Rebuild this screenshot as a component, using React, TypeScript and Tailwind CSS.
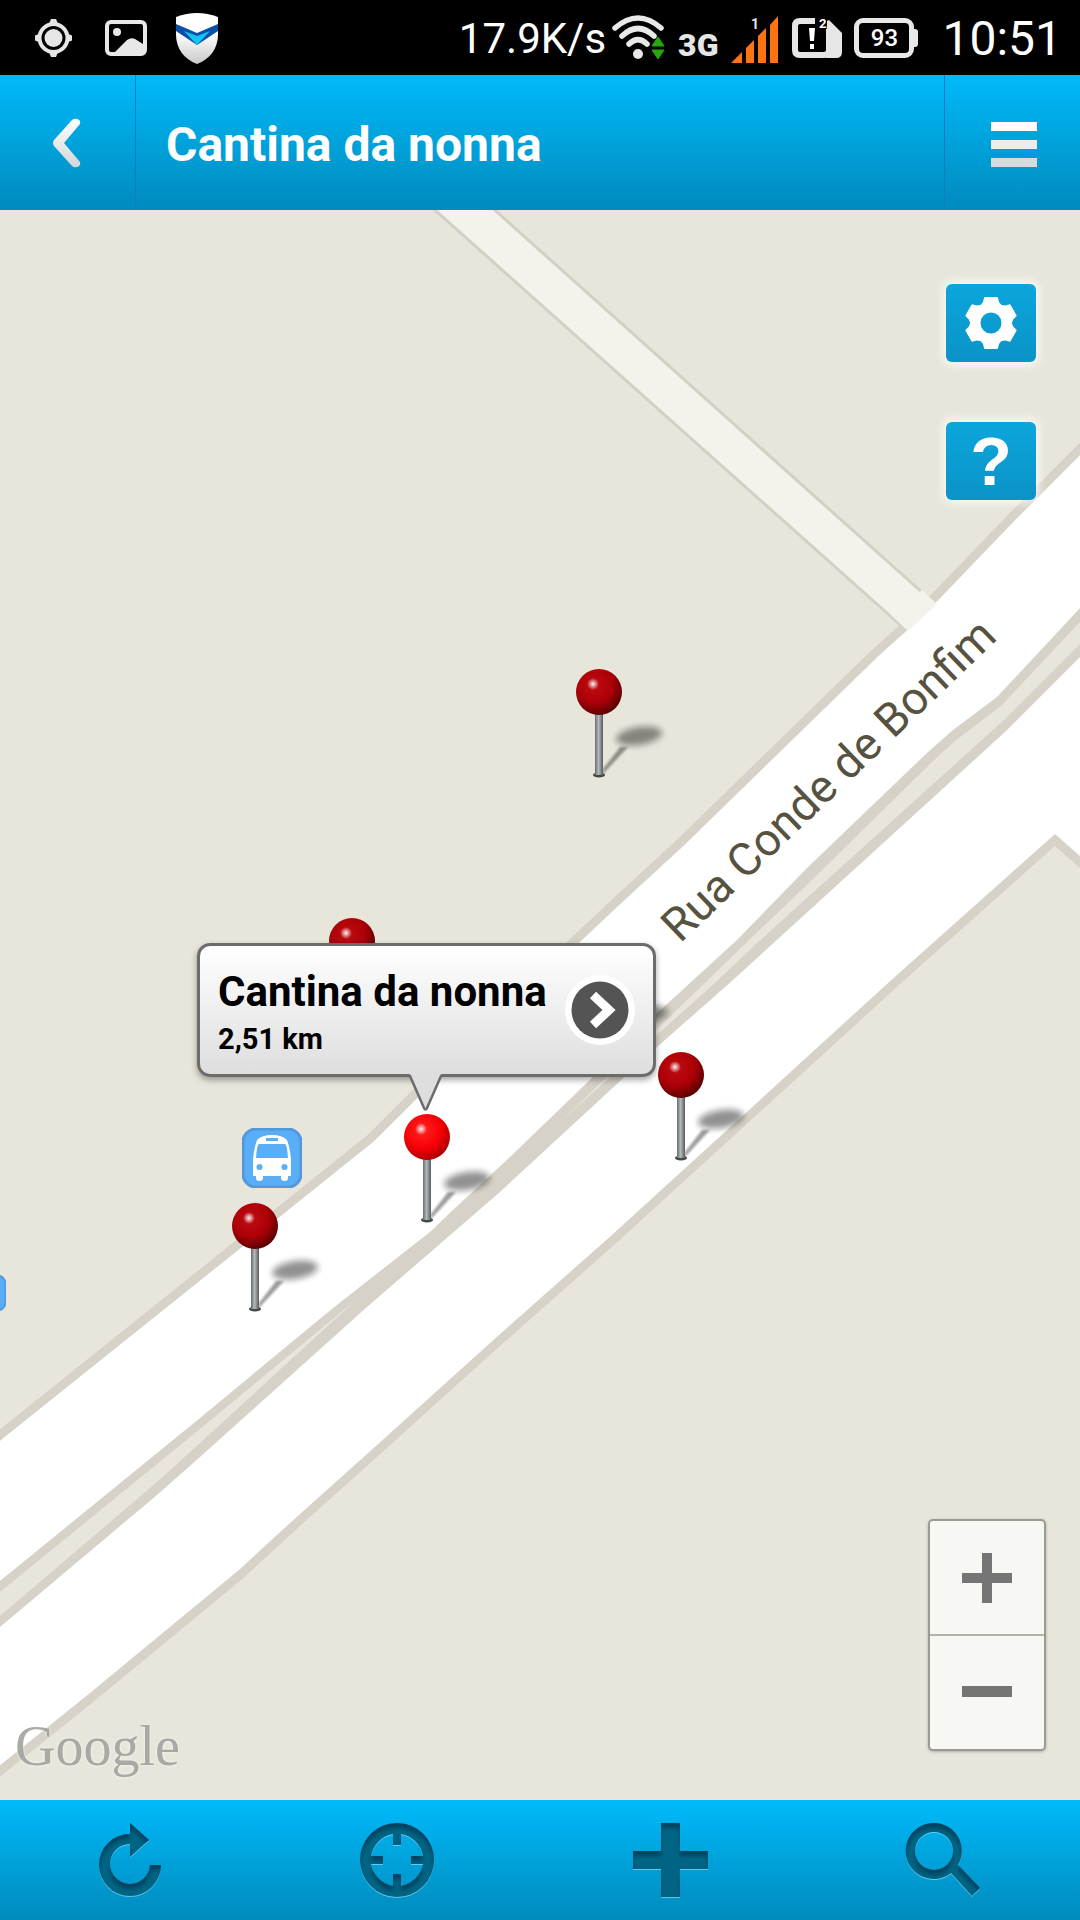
import type { ReactNode } from "react";

const DARK_PIN = { light: "#c00d12", base: "#ab0007", dark: "#5c0003" };
const ACTIVE_PIN = { light: "#ff2424", base: "#f80006", dark: "#b00003" };

function StatusBar() {
  return (
    <div className="flex h-[75px] shrink-0 items-center justify-between bg-black pr-[18px] pl-[35px] text-white">
      <div className="flex items-center gap-[33px]">
        <svg width="37" height="38" viewBox="0 0 37 38" aria-label="Location">
          <circle cx="18.500" cy="19" r="14" fill="none" stroke="#e6e6e6" strokeWidth="4" />
          <circle cx="18.500" cy="19" r="9" fill="#e6e6e6" />
          <path d="M16 0h5l2 5h-9zM16 38h5l2-5h-9zM0 16.500v5l5 2v-9zM37 16.500v5l-5 2v-9z" fill="#e6e6e6" />
        </svg>
        <svg width="42" height="36" viewBox="0 0 42 36" aria-label="Picture">
          <rect x="2" y="2" width="38" height="32" rx="4" fill="none" stroke="#e8e8e8" strokeWidth="4" />
          <circle cx="12" cy="12" r="4" fill="#e8e8e8" />
          <path d="M8 34L22 20Q26 17 30 19L38 24V34Z" fill="#e8e8e8" />
        </svg>
        <svg className="-ml-1" width="42" height="52" viewBox="0 0 42 52" aria-label="Shield">
          <defs>
            <linearGradient id="shield" x1="0" y1="0" x2="0" y2="1">
              <stop offset="0.4" stopColor="#ffffff" />
              <stop offset="1" stopColor="#c9c9c9" />
            </linearGradient>
          </defs>
          <path d="M0 5Q21-3 42 5V22C42 37 34 47 21 52C8 47 0 37 0 22Z" fill="url(#shield)" />
          <path d="M0 12L21 21L42 12V19L21 33L0 19Z" fill="#0b4fa8" />
          <path d="M8 19L21 24L34 19L21 33Z" fill="#12c4ee" />
        </svg>
      </div>
      <div className="flex items-center">
        <span className="pt-[2px] font-[Roboto,sans-serif] text-[42px] leading-[48px]">17.9K/s</span>
        <svg className="ml-[6px]" width="53" height="46" viewBox="0 0 53 46" aria-label="Wi-Fi">
          <g fill="none" stroke="#e8e8e8" strokeWidth="5.500" strokeLinecap="round">
            <path d="M3 13Q26-7 49 13" />
            <path d="M10 21Q26 6 42 21" />
            <path d="M17 29Q26 20 35 29" />
          </g>
          <circle cx="26" cy="39" r="5" fill="#e8e8e8" />
          <path d="M40 31L46 22L52 31ZM40 35L46 44L52 35Z" fill="#27a80b" stroke="#27a80b" strokeWidth="1" />
        </svg>
        <span className="ml-[13px] pt-[15px] font-[Roboto,sans-serif] text-[32px] leading-[32px] font-black text-[#e6e6e6]">3G</span>
        <svg className="ml-[13px]" width="48" height="50" viewBox="0 -2 48 50" aria-label="Signal">
          <path d="M0 48L11 37V48ZM15 33L23 25V48H15ZM27 21L35 13V48H27ZM39 10L47 1V48H39Z" fill="#ff7410" />
          <text x="20" y="14" fontFamily="Roboto, sans-serif" fontSize="14" fontWeight="700" fill="#e6e6e6">1</text>
        </svg>
        <svg className="ml-[13px]" width="50" height="48" viewBox="0 -4 50 48" aria-label="SIM 2">
          <path d="M23 3H8Q3 3 3 8V32Q3 37 8 37H32Q37 37 37 32V11" fill="none" stroke="#e6e6e6" strokeWidth="6" />
          <path d="M35 3L37 2L50 15V34Q50 40 44 40H34Z" fill="#e6e6e6" />
          <path d="M17 10H23L22 23H18ZM18 26H22V31H18Z" fill="#fff" />
          <text x="27" y="10" fontFamily="Roboto, sans-serif" fontSize="13" fontWeight="700" fill="#fff">2</text>
        </svg>
        <div className="ml-[12px] flex items-center">
          <div className="flex h-[40px] w-[60px] items-center justify-center rounded-[9px] border-[5px] border-[#e8e8e8] font-[Roboto,sans-serif] text-[24px] leading-[28px] font-medium">93</div>
          <div className="h-[18px] w-[4px] rounded-r-[3px] bg-[#e8e8e8]" />
        </div>
        <span className="ml-[24px] pt-[2px] font-[Roboto,sans-serif] text-[48px] leading-[56px]">10:51</span>
      </div>
    </div>
  );
}

function Header() {
  return (
    <header className="flex h-[135px] shrink-0 items-stretch bg-linear-to-b from-[#00bafa] to-[#008bbd]">
      <button aria-label="Back" className="flex w-[136px] items-center justify-center border-r border-[#1479c8]">
        <svg width="30" height="50" viewBox="0 0 30 50">
          <defs>
            <linearGradient id="back" x1="0" y1="0" x2="0" y2="1">
              <stop offset="0" stopColor="#fff" />
              <stop offset="1" stopColor="#d2d6d8" />
            </linearGradient>
          </defs>
          <path d="M19 2Q21 0 24 1Q28 2 27 6L11 25L27 44Q28 48 24 49Q21 50 19 48L1 28Q-1 25 1 22Z" fill="url(#back)" />
        </svg>
      </button>
      <h1 className="flex min-w-0 grow items-center pt-[4px] pl-[30px] font-[Roboto,sans-serif] text-[48px] leading-[56px] font-bold text-white">
        Cantina da nonna
      </h1>
      <button aria-label="Menu" className="flex w-[136px] flex-col items-end justify-center gap-[9px] border-l border-[#1479c8] pt-[4px] pr-[43px]">
        <span className="h-[9px] w-[46px] bg-white" />
        <span className="h-[9px] w-[46px] bg-[#ececee]" />
        <span className="h-[9px] w-[46px] bg-[#d8dadd]" />
      </button>
    </header>
  );
}

function Streets() {
  return (
    <svg className="absolute inset-0 size-full" viewBox="0 210 1080 1590" preserveAspectRatio="xMidYMid slice">
      <rect x="-500" y="0" width="2500" height="2200" fill="#e8e6da" />
      <path d="M390 170L905 629L934 603L450 170Z" fill="#f4f3eb" />
      <path d="M390 170L906 630M450 170L934 603" fill="none" stroke="#d3d0c4" strokeWidth="3" />
      <path
        d="M-20 1452L0 1435L371 1138L413 1096L567 948L618 900L680 843L873 655L903 628L933 599L1012 517L1080 449L1110 419V888L1080 862L1055 840L898 980L760 1106L613 1240L500 1340L367 1460L300 1520L240 1575L91 1698L0 1771L-20 1785Z"
        fill="#fff"
        stroke="#d6d2c7"
        strokeWidth="9"
      />
      <path d="M892 616L908 631L937 604L922 590Z" fill="#f4f3eb" />
      <path
        d="M0 1581L200 1418L333 1308L430 1232L453 1210L510 1157L595 1075L655 1015L737 940L807 868L928 752L953 730L997 697L1080 608L1110 578V627L1080 657L1005 732L733 980L657 1047L500 1192L367 1307L200 1457L157 1495L0 1627Z"
        fill="#d6d2c7"
      />
      <path
        d="M1110 592L1080 622L1001 706L955 741L931 763L811 881L748 941L707 981L560 1122L717 981L757 943L1004 720L1080 644L1110 614ZM0 1592L200 1429L357 1299L200 1443L157 1482L0 1616Z"
        fill="#e8e6da"
      />
      <text
        transform="translate(680 944) rotate(-43.800)"
        fontFamily="Roboto, sans-serif"
        fontSize="46"
        fill="#56523f"
      >
        Rua Conde de Bonfim
      </text>
    </svg>
  );
}

function Pin({ id, className, colors, label }: { id: string; className: string; colors: typeof DARK_PIN; label: string }) {
  return (
    <button aria-label={label} className={className}>
      <svg width="96" height="112" viewBox="0 0 96 112">
        <defs>
          <radialGradient id={`${id}-ball`} cx="0.400" cy="0.350" r="0.650">
            <stop offset="0" stopColor={colors.light} />
            <stop offset="0.600" stopColor={colors.base} />
            <stop offset="1" stopColor={colors.dark} />
          </radialGradient>
          <radialGradient id={`${id}-shine`}>
            <stop offset="0" stopColor="#fff" stopOpacity="0.950" />
            <stop offset="1" stopColor="#fff" stopOpacity="0" />
          </radialGradient>
          <linearGradient id={`${id}-stem`} x1="0" y1="0" x2="1" y2="0">
            <stop offset="0" stopColor="#666b6e" />
            <stop offset="0.450" stopColor="#b4b9bc" />
            <stop offset="1" stopColor="#555a5c" />
          </linearGradient>
          <filter id={`${id}-blur`} x="-30%" y="-80%" width="160%" height="260%">
            <feGaussianBlur stdDeviation="3" />
          </filter>
          <filter id={`${id}-thin`} x="-30%" y="-30%" width="160%" height="160%">
            <feGaussianBlur stdDeviation="1" />
          </filter>
        </defs>
        <ellipse
          cx="64"
          cy="68"
          rx="23"
          ry="9"
          transform="rotate(-9 64 68)"
          fill="#111"
          opacity="0.450"
          filter={`url(#${id}-blur)`}
        />
        <path d="M27 107L28 101L45 79L53 79Z" fill="#111" opacity="0.400" filter={`url(#${id}-thin)`} />
        <ellipse cx="24" cy="107" rx="6" ry="2.500" fill="#44484a" />
        <rect x="20" y="44" width="8" height="63" fill={`url(#${id}-stem)`} />
        <circle cx="24" cy="24" r="23" fill={`url(#${id}-ball)`} />
        <circle cx="18" cy="16" r="6" fill={`url(#${id}-shine)`} />
      </svg>
    </button>
  );
}

function BusStop({ className }: { className: string }) {
  return (
    <svg className={className} viewBox="0 0 60 60" aria-label="Bus stop">
      <rect x="1" y="1" width="58" height="58" rx="13" fill="#5aaef8" stroke="#5398dd" strokeWidth="3" />
      <path d="M15 12Q20 7 30 7Q40 7 45 12Q48 20 49 31V48H46V50Q46 53 42.500 53Q39 53 39 50V48H21V50Q21 53 17.500 53Q14 53 14 50V48H11V31Q12 20 15 12Z" fill="#fff" />
      <path d="M24 10H36V13H24ZM17 16H43Q45 16 46 30H14Q15 16 17 16Z" fill="#5aaef8" />
      <circle cx="17.500" cy="39" r="3" fill="#5aaef8" />
      <circle cx="42.500" cy="39" r="3" fill="#5aaef8" />
    </svg>
  );
}

function Callout() {
  return (
    <button className="absolute top-[733px] left-[197px] flex h-[134px] w-[459px] items-center justify-between rounded-[13px] border-[3px] border-[#6c6c6b] bg-linear-to-b from-white to-[#dedede] pr-[18px] pl-[18px] text-left font-[Roboto,sans-serif] font-bold text-black shadow-[0_3px_6px_rgba(0,0,0,0.35)]">
      <span className="flex flex-col pt-[6px]">
        <span className="text-[42px] leading-[52px] whitespace-nowrap">Cantina da nonna</span>
        <span className="text-[29px] leading-[42px]">2,51 km</span>
      </span>
      <svg width="70" height="70" viewBox="0 0 70 70">
        <circle cx="35" cy="35" r="35" fill="#fff" />
        <circle cx="35" cy="35" r="28.500" fill="#545454" />
        <path d="M28 20L44 35L28 50" fill="none" stroke="#fff" strokeWidth="9" />
      </svg>
      <svg className="absolute top-[127px] left-[207px]" width="38" height="40" viewBox="0 0 38 40">
        <path d="M2 0L17 35Q18.500 38 20 35L35 0Z" fill="#dedede" />
        <path d="M1 3H3L17 35Q18.500 38 20 35L34 3H36" fill="none" stroke="#6c6c6b" strokeWidth="2.500" />
      </svg>
    </button>
  );
}

const squareButton =
  "flex h-[78px] w-[90px] items-center justify-center rounded-[6px] bg-linear-to-b from-[#0ba6dc] to-[#0b93c6] text-white shadow-[0_0_10px_4px_rgba(255,255,255,0.65)]";

function MapView() {
  return (
    <main className="relative min-h-[1590px] grow overflow-hidden bg-[#e8e6da]">
      <Streets />
      <BusStop className="absolute top-[918px] left-[242px] size-[60px]" />
      <BusStop className="absolute top-[1065px] -left-[30px] size-[36px]" />

      <Pin id="p1" label="Place 1" colors={DARK_PIN} className="absolute top-[458px] left-[575px]" />
      <Pin id="p2" label="Place 2" colors={DARK_PIN} className="absolute top-[707px] left-[328px]" />
      <Pin id="p3" label="Place 3" colors={DARK_PIN} className="absolute top-[737px] left-[581px]" />
      <Pin id="p4" label="Place 4" colors={DARK_PIN} className="absolute top-[841px] left-[657px]" />
      <Pin id="p5" label="Place 5" colors={DARK_PIN} className="absolute top-[992px] left-[231px]" />
      <Pin id="p6" label="Cantina da nonna" colors={ACTIVE_PIN} className="absolute top-[903px] left-[403px]" />
      <Callout />

      <div className="absolute top-[74px] right-[44px] flex flex-col gap-[60px]">
        <button aria-label="Settings" className={squareButton}>
          <svg width="54" height="54" viewBox="-27 -27 54 54">
            <defs>
              <mask id="gear-hole">
                <rect x="-27" y="-27" width="54" height="54" fill="#fff" />
                <circle r="10.500" fill="#000" />
              </mask>
            </defs>
            <g fill="#fff" mask="url(#gear-hole)">
              <circle r="20" />
              {[0, 60, 120, 180, 240, 300].map((a) => (
                <path key={a} d="M-6-26H6Q7-26 7-25L8-21L12-16H-12L-8-21L-7-25Q-7-26-6-26Z" transform={`rotate(${a})`} />
              ))}
            </g>
          </svg>
        </button>
        <button aria-label="Help" className={squareButton}>
          <span className="font-['Liberation_Sans',sans-serif] text-[68px] leading-[72px] font-bold">?</span>
        </button>
      </div>

      <div className="absolute right-[34px] bottom-[49px] flex h-[232px] w-[118px] flex-col rounded-[5px] border-2 border-[#9c9b93] bg-[#f7f7f3] shadow-[0_1px_3px_rgba(0,0,0,0.25)]">
        <button aria-label="Zoom in" className="flex grow items-center justify-center border-b-2 border-[#b3b3ad]">
          <svg width="50" height="50" viewBox="0 0 50 50">
            <path d="M20 0H30V20H50V30H30V50H20V30H0V20H20Z" fill="#757575" />
          </svg>
        </button>
        <button aria-label="Zoom out" className="flex grow items-center justify-center">
          <svg width="50" height="50" viewBox="0 0 50 50">
            <path d="M0 18H50V29H0Z" fill="#757575" />
          </svg>
        </button>
      </div>

      <span className="absolute bottom-[22px] left-[15px] font-['Liberation_Serif',serif] text-[56px] leading-[64px] text-[#898883]/70 [text-shadow:0_0_3px_rgba(255,255,255,0.8)]">
        Google
      </span>
    </main>
  );
}

function ToolButton({ label, children }: { label: string; children: ReactNode }) {
  return (
    <button aria-label={label}>
      <svg className="overflow-visible" width="74" height="76" viewBox="0 0 74 76">
        <g filter="url(#engraved)">{children}</g>
      </svg>
    </button>
  );
}

function Toolbar() {
  return (
    <nav className="flex h-[120px] shrink-0 items-center justify-between bg-linear-to-b from-[#00bafa] to-[#008bbd] pr-[100px] pl-[87px]">
      <svg className="absolute size-0" aria-hidden="true">
        <filter id="engraved" x="-10%" y="-10%" width="120%" height="120%" colorInterpolationFilters="sRGB">
          <feOffset in="SourceAlpha" dy="5" result="shifted" />
          <feGaussianBlur in="shifted" stdDeviation="2" result="soft" />
          <feComposite in="SourceAlpha" in2="soft" operator="out" result="edge" />
          <feFlood floodColor="#00344e" floodOpacity="0.700" />
          <feComposite in2="edge" operator="in" result="inner" />
          <feOffset in="SourceAlpha" dy="1" result="below" />
          <feFlood floodColor="#8fd6f2" floodOpacity="0.700" />
          <feComposite in2="below" operator="in" result="glow" />
          <feMerge>
            <feMergeNode in="glow" />
            <feMergeNode in="SourceGraphic" />
            <feMergeNode in="inner" />
          </feMerge>
        </filter>
      </svg>
      <ToolButton label="Refresh">
        <path d="M43 1L62 18L43 35V22A20 20 0 1 0 63 43H74A31 31 0 1 1 43 12Z" fill="#006585" />
      </ToolButton>
      <ToolButton label="My location">
        <path
          fillRule="evenodd"
          d="M37 1A37 37 0 1 1 37 75A37 37 0 1 1 37 1ZM33 12A27 27 0 0 0 11 34H23V42H11A27 27 0 0 0 33 64V52H41V64A27 27 0 0 0 63 42H51V34H63A27 27 0 0 0 41 12V23H33Z"
          fill="#006585"
        />
      </ToolButton>
      <ToolButton label="Add">
        <path d="M28 1H47V29H75V47H47V75H28V47H0V29H28Z" fill="#006585" />
      </ToolButton>
      <ToolButton label="Search">
        <path
          fillRule="evenodd"
          d="M28 1A28 28 0 0 1 52 43L74 66L66 74L45 51A28 28 0 1 1 28 1ZM28 10A19 19 0 1 0 28 48A19 19 0 1 0 28 10Z"
          fill="#006585"
        />
      </ToolButton>
    </nav>
  );
}

export default function App() {
  return (
    <div className="flex min-h-screen w-full flex-col overflow-hidden">
      <StatusBar />
      <Header />
      <MapView />
      <Toolbar />
    </div>
  );
}
